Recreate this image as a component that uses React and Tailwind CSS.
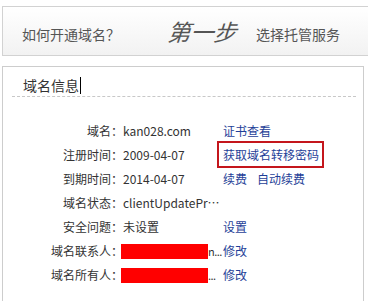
export default function App() {
  const font = { fontFamily: '"Noto Sans CJK SC", "Noto Sans", sans-serif' };
  const rows = [
    { label: "域名：", value: "kan028.com", links: ["证书查看"] },
    { label: "注册时间：", value: "2009-04-07", links: ["获取域名转移密码"], boxed: true },
    { label: "到期时间：", value: "2014-04-07", links: ["续费", "自动续费"] },
    { label: "域名状态：", value: "clientUpdateProhibited", links: [] },
    { label: "安全问题：", value: "未设置", links: ["设置"] },
    { label: "域名联系人：", red: true, tail: "n...", links: ["修改"] },
    { label: "域名所有人：", red: true, tail: "...", links: ["修改"] },
  ];
  return (
    <div className="w-[368px] h-[301px] bg-white overflow-hidden pt-[6px] pl-[2px]" style={font}>
      <div className="h-[50px] border-t border-b border-l border-[#d2d2d2] bg-gradient-to-b from-white to-[#f2f2f2] flex items-center pt-[5px] pl-[19px] text-[#555]">
        <span className="text-[14px] leading-none">如何开通域名？</span>
        <span className="ml-[50px] inline-block text-[23px] leading-none -mt-[4px] text-[#555] [transform:skewX(-18deg)]">第一步</span>
        <span className="ml-[17px] text-[14px] leading-none">选择托管服务</span>
      </div>
      <div className="mt-[10px] w-[362px] h-[240px] border-t border-l border-r border-[#cdcdcd]">
        <div className="h-[25px] pl-[20px] flex items-end text-[14px] text-[#333] leading-none">
          <span>域名信息</span>
          <span className="inline-block w-px h-[17px] bg-black ml-[1px] mb-[-2px]"></span>
        </div>
        <div className="ml-[9px] mr-[7px] mt-[4px] h-[1px] border-t border-dashed border-[#c8c8c8]"></div>
        <div className="mt-[22px] text-[12px]">
          {rows.map((r, i) => (
            <div key={i} className="flex h-[24px] items-center leading-[24px]">
              <div className="w-[120px] text-right text-[#333] shrink-0">{r.label}</div>
              {r.red ? (
                <div className="w-[100px] shrink-0 text-[#333] whitespace-nowrap flex items-center">
                  <span className="inline-block w-[87px] h-[15px] bg-[#ff0000] -ml-[2px] shrink-0"></span>
                  <span className="text-[11px] tracking-[-0.5px]">{r.tail}</span>
                </div>
              ) : (
                <div className="w-[100px] pr-[1px] shrink-0 text-[#333] whitespace-nowrap overflow-hidden text-ellipsis">
                  {r.value}
                </div>
              )}
              <div className="flex gap-[10px] text-[#1f3f98] whitespace-nowrap">
                {r.links.map((l, j) => (
                  <span key={j} className="relative">
                    {l}
                    {r.boxed && (
                      <span className="absolute -left-[6px] -right-[5px] -top-[2px] -bottom-[1px] border-2 border-[#c4161c]"></span>
                    )}
                  </span>
                ))}
              </div>
            </div>
          ))}
        </div>
      </div>
    </div>
  );
}
